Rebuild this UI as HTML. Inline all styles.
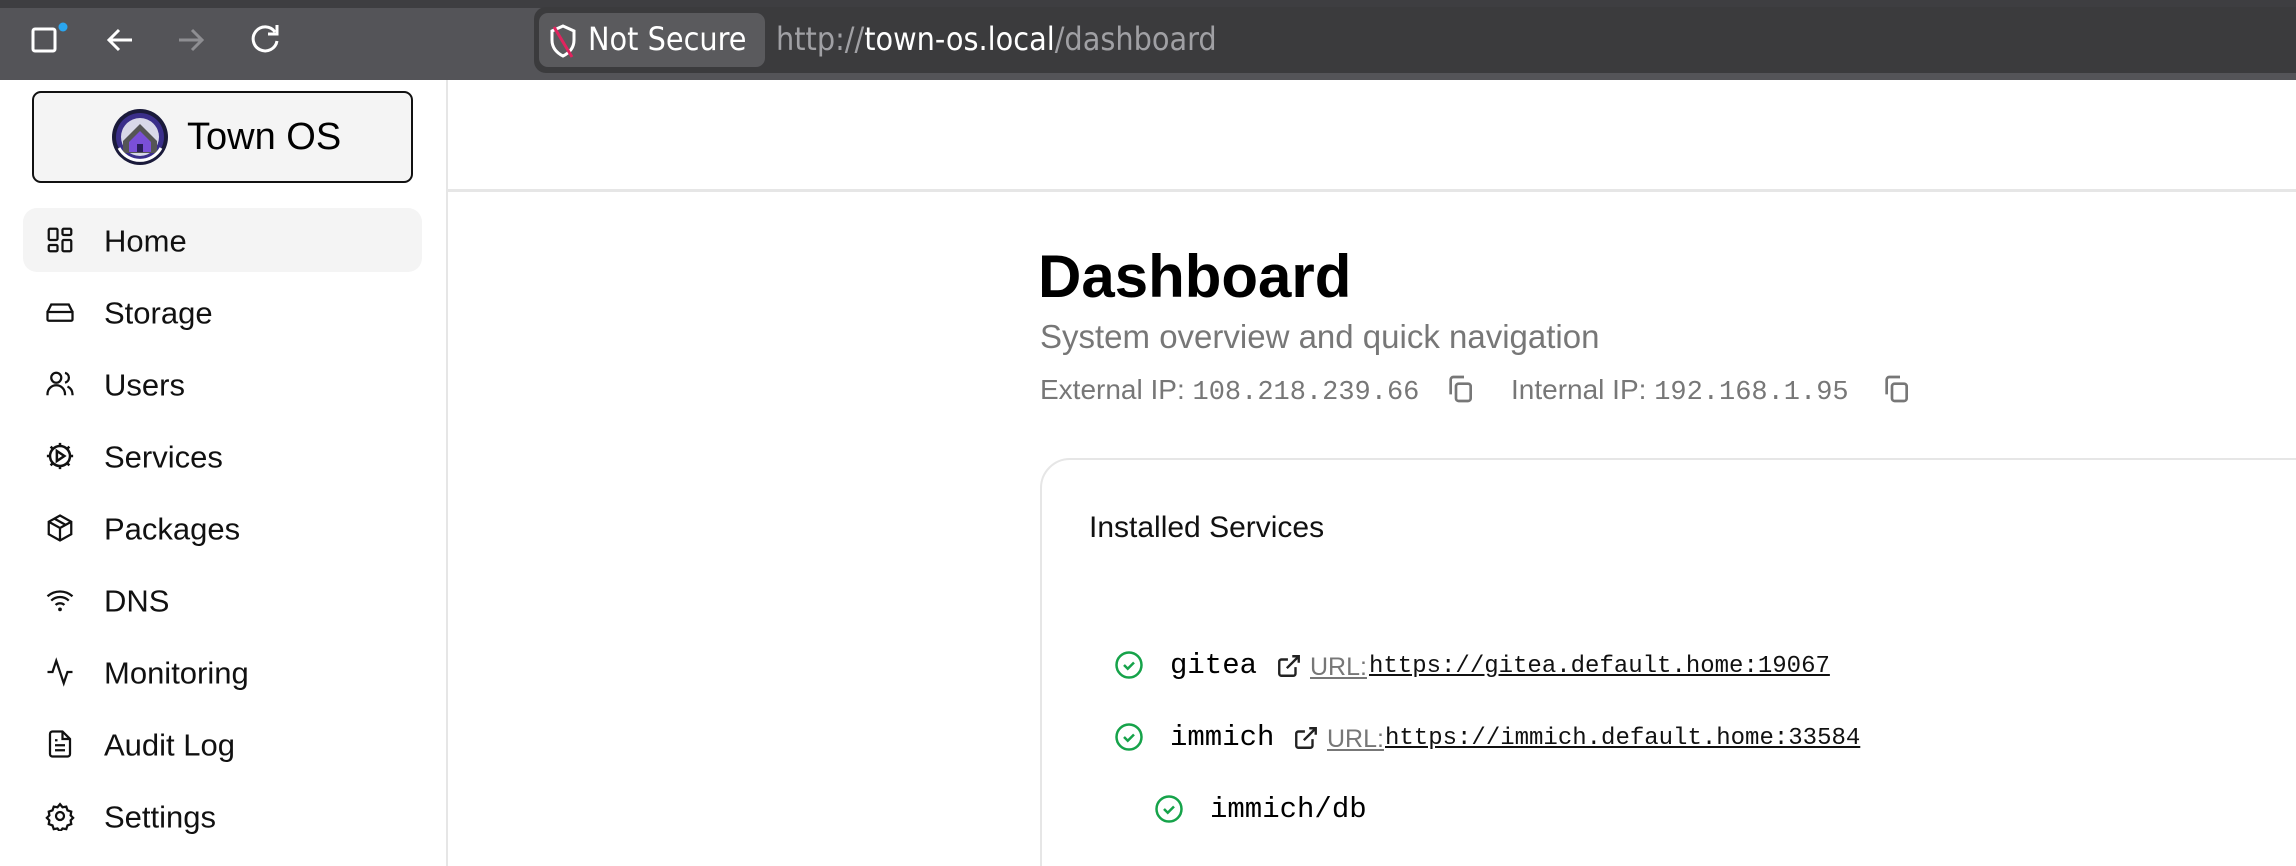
<!DOCTYPE html>
<html style="overflow:hidden;width:2296px;height:866px"><head><meta charset="utf-8"><style>
*{margin:0;padding:0;box-sizing:border-box}
body{width:2296px;height:866px;overflow:hidden;background:#fff;font-family:"Liberation Sans",sans-serif;position:relative;color:#111}
.abs{position:absolute}
#bar{left:0;top:0;width:2296px;height:80px;background:#545458;border-top:8px solid #3e3e41}
#url{left:534px;top:7px;width:1762px;height:66px;background:#3b3b3d;border-radius:12px 0 0 12px}
#pill{left:539px;top:13px;width:226px;height:54px;background:#5a5a5d;border-radius:9px}
.nav{position:absolute;left:23px;width:399px;height:64px;border-radius:14px;font-size:31px;color:#111}
.nav span{position:absolute;left:81px;top:50%;transform:translateY(-46%)}
.nav svg{position:absolute;left:22px;top:50%;transform:translateY(-50%)}
.mono{font-family:"Liberation Mono","DejaVu Sans Mono",monospace}
</style></head><body>
<div id="bar" class="abs"></div>
<svg class="abs" style="left:30px;top:22px" width="40" height="36" viewBox="0 0 40 36"><rect x="3" y="7" width="22" height="22" rx="2" fill="none" stroke="#fff" stroke-width="3"/><circle cx="33" cy="5" r="4.5" fill="#2aa6f0"/></svg>
<svg class="abs" style="left:104px;top:24px" width="32" height="32" viewBox="0 0 32 32"><path d="M28 16H5M15 6L5 16l10 10" fill="none" stroke="#fff" stroke-width="3"/></svg>
<svg class="abs" style="left:175px;top:24px" width="32" height="32" viewBox="0 0 32 32"><path d="M4 16h23M17 6l10 10-10 10" fill="none" stroke="#8e8e92" stroke-width="3"/></svg>
<svg class="abs" style="left:248px;top:22px" width="34" height="34" viewBox="0 0 34 34"><path d="M27 10A12 12 0 1 0 29 19" fill="none" stroke="#fff" stroke-width="3"/><path d="M29 3v9h-9" fill="none" stroke="#fff" stroke-width="3"/></svg>
<div id="url" class="abs"></div>
<div id="pill" class="abs"></div>
<svg class="abs" style="left:548px;top:23px" width="30" height="36" viewBox="0 0 30 36"><path d="M15 3L4 8v9c0 8 5 13 11 16 6-3 11-8 11-16V8z" fill="none" stroke="#fff" stroke-width="3"/><path d="M6 4l18 30" stroke="#e0245e" stroke-width="3"/></svg>
<div class="abs" style="left:588px;top:20px;font-size:32px;color:#fff;font-family:'DejaVu Sans Condensed','Liberation Sans',sans-serif">Not Secure</div>
<div class="abs" style="left:776px;top:20px;font-size:32px;color:#a0a0a4;font-family:'DejaVu Sans Condensed','Liberation Sans',sans-serif">http://<span style="color:#fff">town-os.local</span>/dashboard</div>

<div class="abs" style="left:446px;top:80px;width:2px;height:786px;background:#e6e6e6"></div>
<div class="abs" style="left:32px;top:91px;width:381px;height:92px;border:2px solid #111;border-radius:9px;background:#f4f4f4"></div>
<svg class="abs" style="left:111px;top:108px" width="58" height="58" viewBox="0 0 58 58"><circle cx="29" cy="29" r="28" fill="#1a1a3a"/><circle cx="29" cy="29" r="24" fill="#3a2e8a"/><circle cx="29" cy="29" r="19" fill="#d8d8e8"/><path d="M12 33L29 16l17 17v12H12z" fill="#555"/><path d="M18 34l11-11 11 11v10H18z" fill="#7a4fd8"/><rect x="26" y="36" width="6" height="8" fill="#2a1e5a"/><path d="M8 40a24 24 0 0 0 42 0" fill="none" stroke="#fff" stroke-width="3"/></svg>
<div class="abs" style="left:187px;top:116px;font-size:38px;color:#000">Town OS</div>

<div class="nav" style="top:208px;background:#f4f4f4"><svg width="30" height="30" viewBox="0 0 24 24" fill="none" stroke="#111" stroke-width="1.8"><rect x="3" y="3" width="7" height="9" rx="1"/><rect x="14" y="3" width="7" height="5" rx="1"/><rect x="14" y="12" width="7" height="9" rx="1"/><rect x="3" y="16" width="7" height="5" rx="1"/></svg><span>Home</span></div>
<div class="nav" style="top:280px"><svg width="30" height="30" viewBox="0 0 24 24" fill="none" stroke="#111" stroke-width="1.8"><path d="M2 12h20v6a1 1 0 0 1-1 1H3a1 1 0 0 1-1-1z"/><path d="M2 12l3-6h14l3 6"/><path d="M6 16h.01M9 16h.01"/></svg><span>Storage</span></div>
<div class="nav" style="top:352px"><svg width="30" height="30" viewBox="0 0 24 24" fill="none" stroke="#111" stroke-width="1.8"><circle cx="9" cy="7" r="4"/><path d="M2 21v-1a7 7 0 0 1 14 0v1"/><path d="M16 3.1a4 4 0 0 1 0 7.8M22 21v-1a7 7 0 0 0-4-6"/></svg><span>Users</span></div>
<div class="nav" style="top:424px"><svg width="30" height="30" viewBox="0 0 24 24" fill="none" stroke="#111" stroke-width="2"><circle cx="12" cy="12" r="8"/><path d="M12 1.5v3M12 19.5v3M1.5 12h3M19.5 12h3M4.5 4.5l2 2M17.5 17.5l2 2M4.5 19.5l2-2M17.5 6.5l2-2"/><path d="M9.5 8l6 4-6 4z"/></svg><span>Services</span></div>
<div class="nav" style="top:496px"><svg width="30" height="30" viewBox="0 0 24 24" fill="none" stroke="#111" stroke-width="1.8"><path d="M12 2l9 5v10l-9 5-9-5V7z"/><path d="M3 7l9 5 9-5M12 12v10M7.5 4.5l9 5"/></svg><span>Packages</span></div>
<div class="nav" style="top:568px"><svg width="30" height="30" viewBox="0 0 24 24" fill="none" stroke="#111" stroke-width="1.8"><path d="M2 9a15 15 0 0 1 20 0M5 12.5a10 10 0 0 1 14 0M8.5 16a5 5 0 0 1 7 0"/><circle cx="12" cy="19.5" r=".6" fill="#111"/></svg><span>DNS</span></div>
<div class="nav" style="top:640px"><svg width="30" height="30" viewBox="0 0 24 24" fill="none" stroke="#111" stroke-width="1.8"><path d="M22 12h-4l-3 9L9 3l-3 9H2"/></svg><span>Monitoring</span></div>
<div class="nav" style="top:712px"><svg width="30" height="30" viewBox="0 0 24 24" fill="none" stroke="#111" stroke-width="1.8"><path d="M14 2H6a2 2 0 0 0-2 2v16a2 2 0 0 0 2 2h12a2 2 0 0 0 2-2V8z"/><path d="M14 2v6h6M8 13h8M8 17h8M8 9h2"/></svg><span>Audit Log</span></div>
<div class="nav" style="top:784px"><svg width="30" height="30" viewBox="0 0 24 24" fill="none" stroke="#111" stroke-width="1.8"><path d="M12 2.5l2 2.5 3-.5 1 3 3 1-.5 3 2 2-2 2 .5 3-3 1-1 3-3-.5-2 2.5-2-2.5-3 .5-1-3-3-1 .5-3-2-2 2-2-.5-3 3-1 1-3 3 .5z"/><circle cx="12" cy="12" r="3.2"/></svg><span>Settings</span></div>

<div class="abs" style="left:448px;top:189px;width:1848px;height:3px;background:#e6e6e6"></div>
<div class="abs" style="left:1038px;top:242px;font-size:60px;font-weight:bold;color:#000">Dashboard</div>
<div class="abs" style="left:1040px;top:318px;font-size:33px;color:#777">System overview and quick navigation</div>
<div class="abs" style="left:1040px;top:374px;font-size:28px;color:#777;white-space:nowrap">External IP: <span class="mono" style="font-size:27px">108.218.239.66</span></div>
<svg class="abs" style="left:1444px;top:373px" width="32" height="32" viewBox="0 0 24 24" fill="none" stroke="#777" stroke-width="2"><rect x="9" y="8" width="11" height="13" rx="2"/><path d="M5 16V5a2 2 0 0 1 2-2h8"/></svg>
<div class="abs" style="left:1511px;top:374px;font-size:28px;color:#777;white-space:nowrap">Internal IP: <span class="mono" style="font-size:27px">192.168.1.95</span></div>
<svg class="abs" style="left:1880px;top:373px" width="32" height="32" viewBox="0 0 24 24" fill="none" stroke="#777" stroke-width="2"><rect x="9" y="8" width="11" height="13" rx="2"/><path d="M5 16V5a2 2 0 0 1 2-2h8"/></svg>

<div class="abs" style="left:1040px;top:458px;width:1290px;height:440px;border:2px solid #e6e6e6;border-radius:30px"></div>
<div class="abs" style="left:1089px;top:511px;font-size:30px;color:#111">Installed Services</div>

<svg class="abs" style="left:1114px;top:650px" width="30" height="30" viewBox="0 0 24 24" fill="none" stroke="#16a34a" stroke-width="2"><circle cx="12" cy="12" r="10"/><path d="M8 12l3 3 5-5"/></svg>
<div class="abs mono" style="left:1170px;top:649px;font-size:29px;color:#000">gitea</div>
<svg class="abs" style="left:1276px;top:653px" width="26" height="26" viewBox="0 0 24 24" fill="none" stroke="#222" stroke-width="2.2"><path d="M18 13v6a2 2 0 0 1-2 2H5a2 2 0 0 1-2-2V8a2 2 0 0 1 2-2h6M15 3h6v6M10 14L21 3"/></svg>
<div class="abs" style="left:1310px;top:653px;font-size:25px;color:#777;text-decoration:underline">URL:</div>
<div class="abs mono" style="left:1369px;top:653px;font-size:24px;color:#111;text-decoration:underline">https://gitea.default.home:19067</div>

<svg class="abs" style="left:1114px;top:722px" width="30" height="30" viewBox="0 0 24 24" fill="none" stroke="#16a34a" stroke-width="2"><circle cx="12" cy="12" r="10"/><path d="M8 12l3 3 5-5"/></svg>
<div class="abs mono" style="left:1170px;top:721px;font-size:29px;color:#000">immich</div>
<svg class="abs" style="left:1293px;top:725px" width="26" height="26" viewBox="0 0 24 24" fill="none" stroke="#222" stroke-width="2.2"><path d="M18 13v6a2 2 0 0 1-2 2H5a2 2 0 0 1-2-2V8a2 2 0 0 1 2-2h6M15 3h6v6M10 14L21 3"/></svg>
<div class="abs" style="left:1327px;top:725px;font-size:25px;color:#777;text-decoration:underline">URL:</div>
<div class="abs mono" style="left:1385px;top:725px;font-size:24px;color:#111;text-decoration:underline">https://immich.default.home:33584</div>

<svg class="abs" style="left:1154px;top:794px" width="30" height="30" viewBox="0 0 24 24" fill="none" stroke="#16a34a" stroke-width="2"><circle cx="12" cy="12" r="10"/><path d="M8 12l3 3 5-5"/></svg>
<div class="abs mono" style="left:1210px;top:793px;font-size:29px;color:#000">immich/db</div>
</body></html>
